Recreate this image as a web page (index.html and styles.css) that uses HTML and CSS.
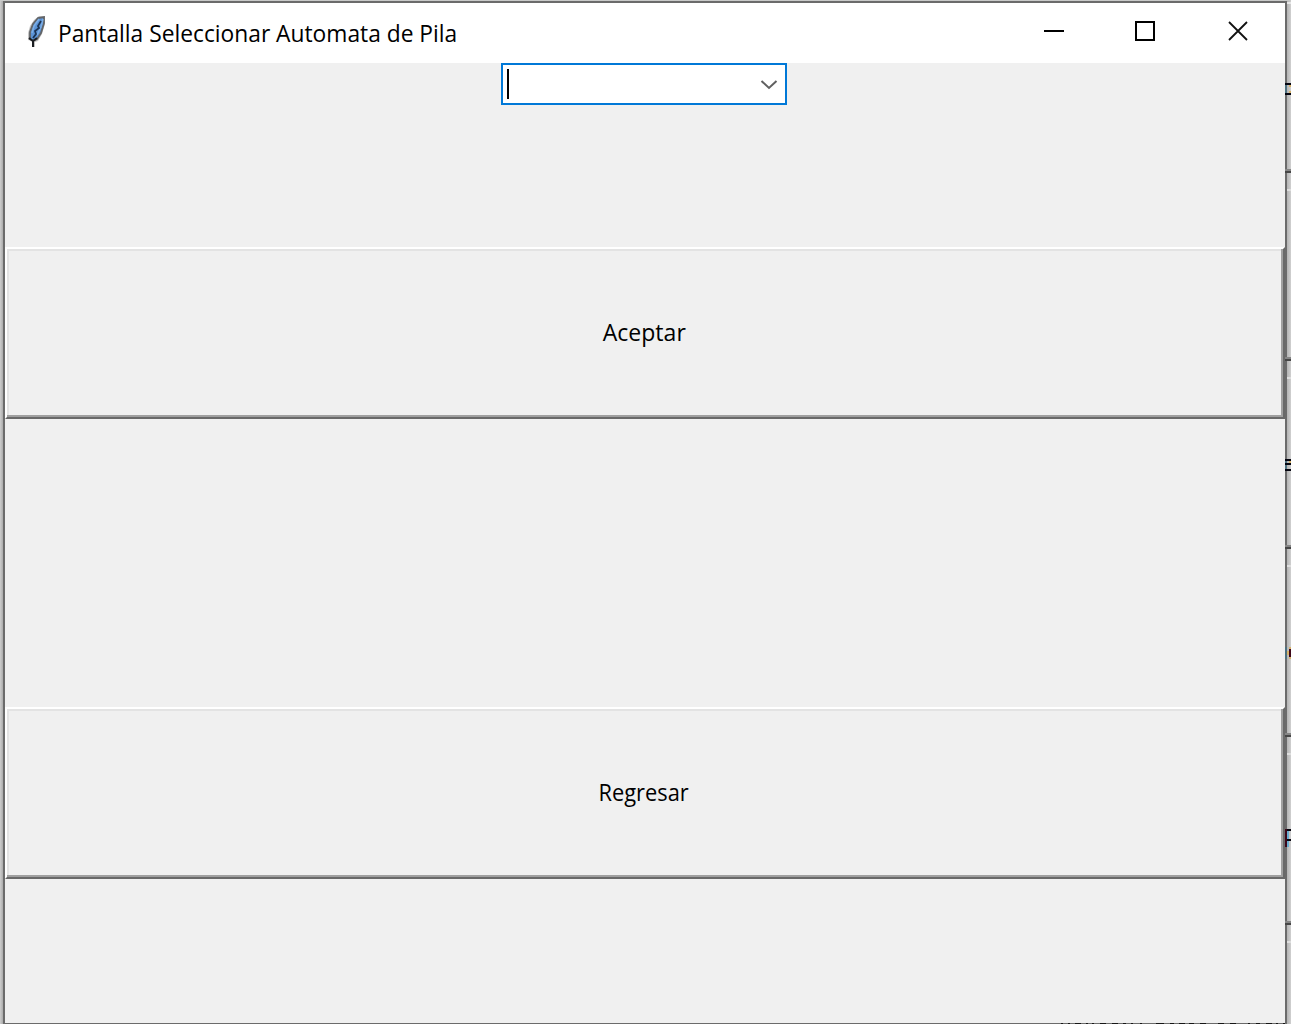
FILE: index.html
```html
<!DOCTYPE html>
<html lang="es">
<head>
<meta charset="utf-8">
<title>Pantalla Seleccionar Automata de Pila</title>
<link rel="stylesheet" href="styles.css">
</head>
<body>
<main class="window">
  <header class="titlebar">
    <svg class="feather" width="20" height="34" viewBox="0 0 20 34">
      <path d="M5 32V26L1 25L1 18L3 11L7 5L12 1L18 1L18 9L15 19L11 26L8 27V32Z" fill="#c4c4c4"/>
      <path d="M3 24L3 17L6 9L11 3L17 2L17 8L14 18L10 24L6 26Z" fill="#5b93d6" stroke="#626467" stroke-width="1.8"/>
      <path d="M12 4L7 11L5 18M16 4L14 12L10 20" fill="none" stroke="#7caee6" stroke-width="1.5"/>
      <path d="M14 6L11 11L12 13L8 16L9 19L6 23" fill="none" stroke="#1c3454" stroke-width="1.8"/>
      <path d="M2 23L6 26L10 23M6 25V32" fill="none" stroke="#1b1e22" stroke-width="2"/>
    </svg>
    <h1 class="title"><span class="title-text">Pantalla Seleccionar Automata de Pila</span></h1>
    <svg class="controls" width="200" height="24" viewBox="0 0 200 24">
      <path d="M0 12H20" stroke="#000" stroke-width="2"/>
      <path d="M92 3H110V21H92Z" fill="none" stroke="#000" stroke-width="2"/>
      <path d="M185 3L203 21M203 3L185 21" stroke="#111" stroke-width="1.8"/>
    </svg>
  </header>
  <section class="content">
    <div class="combo">
      <span class="caret"></span>
      <svg class="chevron" width="18" height="12" viewBox="0 0 18 12"><path d="M1.5 2L9 9L16.5 2" fill="none" stroke="#606060" stroke-width="2"/></svg>
    </div>
    <button class="action accept"><span class="accept-text">Aceptar</span></button>
    <button class="action back"><span class="back-text">Regresar</span></button>
  </section>
</main>
<svg class="behind" width="6" height="1024" viewBox="0 0 6 1024" shape-rendering="crispEdges">
  <path d="M2 3H6" stroke="#e8e8e8" stroke-width="2"/>
  <g fill="#858585"><path d="M0 169h6v2H0zM0 357h6v2H0zM0 545h6v2H0zM0 733h6v2H0zM0 921h6v2H0z"/></g>
  <g fill="#464646"><path d="M0 171h6v2H0zM0 359h6v2H0zM0 547h6v2H0zM0 735h6v2H0zM0 923h6v2H0z"/></g>
  <g fill="#dedede"><path d="M2 189h4v2H2zM2 377h4v2H2zM2 565h4v2H2zM2 753h4v2H2zM2 941h4v2H2z"/></g>
  <path d="M0 83h6v2H0zM0 93h6v2H0zM0 459h6v2H0zM0 463h6v2H0zM0 469h6v2H0zM2 829h4v2H2zM2 839h4v2H2z" fill="#050510"/>
  <path d="M0 85h2v8H0zM0 461h2v2H0zM0 465h2v4H0zM0 647h2v12H0z" fill="#4d7180"/>
  <path d="M4 85h2v2H4zM4 91h2v2H4zM4 461h2v2H4zM2 651h2v4H2zM4 647h2v2H4zM4 657h2v2H4z" fill="#d7b36b"/>
  <path d="M4 649h2v8H4zM0 829h2v18H0z" fill="#3d0718"/>
  <path d="M2 831h2v8H2zM2 841h2v6H2z" fill="#69add0"/>
</svg>
<svg class="behind-bottom" width="226" height="1" viewBox="0 0 226 1"><path d="M0 .5H226" stroke="#171717" stroke-dasharray="2 5 2 5 6 5 2 4 2 6 6 6 6 5 3 5 2 7 2 14 8 6 4 5 6 4 5 6 6 12 6 6 6 12 2 6 4 6 6 4"/></svg>
</body>
</html>
```
FILE: styles.css
```css
* { box-sizing: border-box; }
body {
  margin: 0;
  width: 1291px;
  height: 1024px;
  padding: 1px 4px 0 3px;
  overflow: hidden;
  background: linear-gradient(90deg, #cecece 0, #ababab 3px, #b4b4b4 1287px, #d0d0d0 1291px);
  box-shadow: inset 0 1px #c9cac9;
  font-family: "Open Sans", "Noto Sans", sans-serif;
  color: #000;
}
.window {
  display: flex;
  flex-direction: column;
  width: 1284px;
  height: 1023px;
  border: 2px solid #6b6b6b;
  border-bottom-width: 1px;
  background: #f0f0f0;
}
.titlebar {
  display: flex;
  flex: none;
  height: 60px;
  padding-left: 22px;
  background: #fff;
}
.feather { margin-top: 12px; flex: none; }
.title {
  width: 400px;
  height: 60px;
  margin: 0 0 0 11px;
  font-size: 24px;
  line-height: 60px;
  font-weight: 400;
  white-space: nowrap;
}
.title-text, .accept-text, .back-text { display: inline-block; }
.title-text { transform: scaleX(.949); transform-origin: left; }
.controls { margin: 16px 0 0 586px; flex: none; overflow: visible; }
.content { display: flex; flex-direction: column; align-items: center; }
.combo {
  display: flex;
  align-items: center;
  justify-content: space-between;
  width: 286px;
  height: 42px;
  margin-right: 2px;
  padding: 0 7px 0 4px;
  border: 2px solid #0078d7;
  background: #fff;
}
.caret { width: 2px; height: 30px; background: #000; }
.chevron { margin-top: 2px; }
.action {
  width: 1280px;
  height: 172px;
  padding: 0 2px 2px 0;
  border: 2px solid;
  border-color: #fff #696969 #696969 #fff;
  background: #f0f0f0;
  box-shadow: inset -2px -2px #a0a0a0, inset 2px 2px #e3e3e3;
  font: 24px/32px "Open Sans", "Noto Sans", sans-serif;
  color: #000;
}
.accept { margin-top: 142px; }
.back { margin-top: 288px; }
.accept-text { transform: scaleX(.96); }
.back-text { transform: scaleX(.91); }
.behind { position: absolute; left: 1285px; top: 0; }
.behind-bottom { position: absolute; left: 1061px; top: 1023px; }
```
